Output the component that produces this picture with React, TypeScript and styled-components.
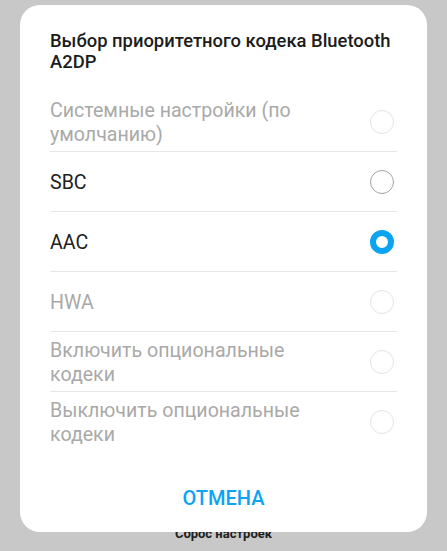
import * as React from "react"
import styled, { createGlobalStyle } from "styled-components"

const GlobalStyle = createGlobalStyle`
  html, body {
    margin: 0;
    padding: 0;
    background: #c8c8c8;
  }
  * {
    box-sizing: border-box;
  }
`

const Screen = styled.div`
  position: relative;
  width: 447px;
  height: 551px;
  overflow: hidden;
  background: #c8c8c8;
  font-family: Roboto, "Noto Sans", sans-serif;
  display: flex;
  flex-direction: column;
  justify-content: flex-end;
`

const BackdropLabel = styled.div`
  padding-bottom: 7px;
  text-align: center;
  font-size: 13px;
  font-weight: 700;
  line-height: 20px;
  color: #1e1e1e;
`

const Dialog = styled.div`
  position: absolute;
  top: 5px;
  left: 20px;
  width: 407px;
  height: 527px;
  background: #ffffff;
  border-radius: 20px;
  display: flex;
  flex-direction: column;
`

const Title = styled.h2`
  margin: 0;
  padding: 25px 28px 0 30px;
  font-size: 18.4px;
  font-weight: 500;
  line-height: 21px;
  color: #1c1c1c;
`

const List = styled.ul`
  list-style: none;
  margin: 20px 30px 0 30px;
  padding: 0;
`

const Row = styled.li<{ $last?: boolean }>`
  height: 60px;
  display: flex;
  align-items: center;
  justify-content: space-between;
  border-bottom: ${(p) => (p.$last ? "none" : "1px solid #e6e6e6")};
`

const Label = styled.span<{ $disabled?: boolean }>`
  max-width: 290px;
  padding-top: 2px;
  font-size: 19.6px;
  line-height: 24px;
  color: ${(p) => (p.$disabled ? "#a9a9a9" : "#212121")};
`

const Radio = styled.span<{ $checked?: boolean; $disabled?: boolean }>`
  flex: none;
  width: 24px;
  height: 24px;
  margin-right: 3px;
  border-radius: 50%;
  border: ${(p) =>
    p.$checked
      ? "6.5px solid #0aa4f2"
      : `1px solid ${p.$disabled ? "#e4e4e4" : "#a3a3a3"}`};
`

const Actions = styled.div`
  height: 80px;
  display: flex;
  justify-content: center;
  padding-top: 34px;
`

const CancelButton = styled.button`
  border: none;
  background: none;
  padding: 0;
  font-family: Roboto, "Noto Sans", sans-serif;
  font-size: 20px;
  font-weight: 500;
  line-height: 24px;
  height: 24px;
  color: #0aa4f2;
`

const options = [
  { label: "Системные настройки (по умолчанию)", disabled: true },
  { label: "SBC" },
  { label: "AAC", checked: true },
  { label: "HWA", disabled: true },
  { label: "Включить опциональные кодеки", disabled: true },
  { label: "Выключить опциональные кодеки", disabled: true },
]

export default function App() {
  return (
    <>
      <GlobalStyle />
      <Screen>
        <BackdropLabel>Сброс настроек</BackdropLabel>
        <Dialog>
          <Title>Выбор приоритетного кодека Bluetooth A2DP</Title>
          <List>
            {options.map((o, i) => (
              <Row key={o.label} $last={i === options.length - 1}>
                <Label $disabled={o.disabled}>{o.label}</Label>
                <Radio $checked={o.checked} $disabled={o.disabled} />
              </Row>
            ))}
          </List>
          <Actions>
            <CancelButton>ОТМЕНА</CancelButton>
          </Actions>
        </Dialog>
      </Screen>
    </>
  )
}
